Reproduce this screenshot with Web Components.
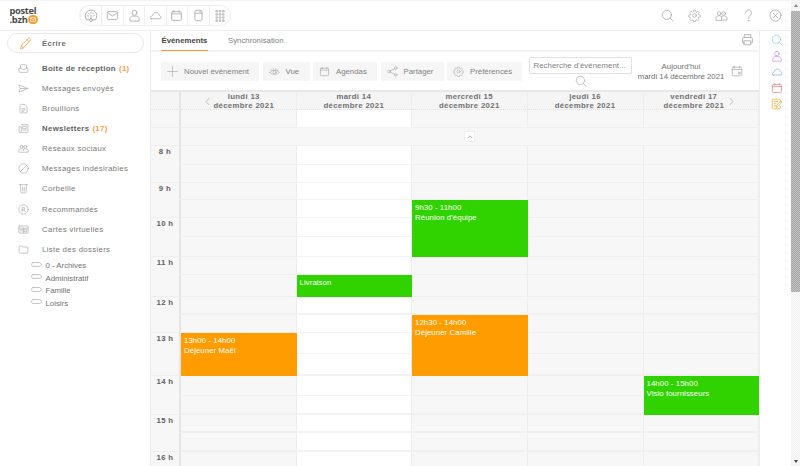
<!DOCTYPE html>
<html lang="fr"><head><meta charset="utf-8"><title>Agenda</title>
<style>
html,body{margin:0;padding:0;height:466px;overflow:hidden;background:#fff}
body{font-family:"Liberation Sans",Arial,sans-serif;color:#666}
</style></head><body>
<app-shell></app-shell>
<script>
const ic={
 dash:'<path d="M4 15.500a8.300 8.300 0 1 1 12 0h-3.500M7.500 15.500H4"/><path d="M10 14V9M5 9l1.500 1M15 9l-1.500 1M10 4.500V6M6.500 6l1 1M13.500 6l-1 1"/><circle cx="10" cy="16" r="2"/>',
 mail:'<rect x="2" y="4" width="16" height="12" rx="1.500"/><path d="M3 6l7 5 7-5"/>',
 user:'<circle cx="10" cy="6" r="3.800"/><path d="M3 18v-3c0-2.500 2-4 4-4h6c2 0 4 1.500 4 4v3z"/>',
 cloud:'<path d="M3.500 15h13c2.500 0 2.500-3.500.5-4C15.500 8 13 5 10.500 5 8 5 6 8 5 10.500 2 11 1 15 3.500 15z"/>',
 cal:'<rect x="2.500" y="4" width="15" height="13.500" rx="1.500"/><path d="M2.500 7.500h15M6 2.500V5M14 2.500V5"/>',
 drive:'<rect x="4.500" y="2" width="11" height="16" rx="2.500"/><path d="M4.500 6.500h11M11.500 4.300h2"/>',
 search:'<circle cx="9" cy="9" r="7"/><path d="M14 14l4.500 4.500"/>',
 gear:'<circle cx="10" cy="10" r="2.800"/><path d="M8.500 1.500h3l.5 2.500 1.700.7 2.100-1.400 2.100 2.100-1.400 2.100.7 1.700 2.500.5v3l-2.500.5-.7 1.700 1.400 2.100-2.100 2.100-2.100-1.400-1.700.7-.5 2.500h-3l-.5-2.500-1.700-.7-2.100 1.400-2.100-2.100 1.400-2.100-.7-1.700-2.500-.5v-3l2.500-.5.7-1.700-1.400-2.100 2.100-2.100 2.100 1.400 1.700-.7z" transform="translate(.8 .4) scale(.92)"/>',
 people:'<circle cx="6.500" cy="7" r="2.800"/><circle cx="13.500" cy="7" r="2.800"/><path d="M1.500 17v-3c0-2 1.500-3.500 5-3.500S10 12 10 14v3zM10 14c0-2 1-3.500 3.500-3.500s5 1.500 5 3.500v3H10"/>',
 help:'<path d="M5.500 6C5.500 3.500 7.500 1.500 10 1.500c2.500 0 4.500 2 4.500 4.500 0 3.500-4.500 4-4.500 8"/><circle cx="10" cy="18" r=".6"/>',
 close:'<circle cx="10" cy="10" r="8.500"/><path d="M6.500 6.500l7 7M13.500 6.500l-7 7"/>',
 print:'<path d="M5 7V2.500h10V7M5 15H2.500V8.500C2.500 7.500 3 7 4 7h12c1 0 1.500.5 1.500 1.500V15H15"/><rect x="5" y="12" width="10" height="6"/>',
 pencil:'<path d="M2.500 18l1-5L14 2.500c1-1 2-1 3 0s1 2 0 3L6.500 17z"/><path d="M12.500 4l3.500 3.500M3.500 13l3 4"/>',
 inbox:'<path d="M4.500 9V4.500C4.500 3.500 5 3 6 3h8c1 0 1.500.5 1.500 1.500V9"/><path d="M2 9.500h4.500l1.500 2.500h4l1.500-2.500H18v6c0 1-.5 1.500-1.500 1.500h-13C2.500 17 2 16.500 2 15.500z"/>',
 sent:'<path d="M2 3.500l16 6.500-16 6.500 2-6.500zM4 10h14"/>',
 draft:'<path d="M3.500 4c0-1 .5-1.500 1.500-1.500h7.500L16.500 7v9.500c0 1-.5 1.500-1.500 1.500H5c-1 0-1.500-.5-1.500-1.500z"/><path d="M7 10.500h6M7 13h6M7 15.500h3"/>',
 news:'<path d="M6 3h12v13c0 1-.5 1.500-1.500 1.500h-13C2.500 17.500 2 17 2 16V7h4v9"/><path d="M9 6h6v4.500H9zM9 13h6"/>',
 social:'<circle cx="6.500" cy="7" r="2.800"/><circle cx="13.500" cy="7" r="2.800"/><path d="M1.500 16v-2c0-2 1.500-3.500 5-3.500S10 12 10 14c0-2 1-3.500 3.500-3.500s5 1.500 5 3.500v2z"/>',
 ban:'<circle cx="10" cy="10" r="8.500"/><path d="M4.500 15.500l11-11"/>',
 trash:'<path d="M2.500 3h15M4.500 3l.7 13.500c0 1 .5 1.500 1.500 1.500h6.600c1 0 1.500-.5 1.500-1.500L15.500 3M8.500 7.500v7M11.500 7.500v7"/>',
 reg:'<circle cx="10" cy="10" r="8.500"/><path d="M7.500 14V6.500h3c2.500 0 2.500 4 0 4h-3M10.500 10.500L13 14"/>',
 cards:'<rect x="1.500" y="3.500" width="17" height="13" rx="1"/><path d="M1.500 7.500h17M10 7.500v9M4 10h4M4 12.500h4M12 10h4v4h-4z"/>',
 folder:'<path d="M2 5c0-1 .5-1.500 1.500-1.500h4L9 5.500h7.500c1 0 1.500.5 1.500 1.500v8c0 1-.5 1.500-1.500 1.500h-13C2.500 16.500 2 16 2 15z"/>',
 tag:'<path d="M4 6.500h11.500c1 0 3.500 2 3.500 3.500s-2.500 3.500-3.500 3.500H4c-1.800 0-3-1.500-3-3.500s1.200-3.500 3-3.500z"/>',
 plus:'<path d="M10 1v18M1 10h18"/>',
 eye:'<path d="M1.500 11.500c3.500-5 13.500-5 17 0-3.500 5-13.500 5-17 0z"/><circle cx="10" cy="11.500" r="2.800"/><path d="M3.500 6.500l1.500 2M7.500 4.500l.5 2.500M12.500 4.500L12 7M16.500 6.500L15 8.500"/>',
 share:'<circle cx="3.800" cy="10" r="2.300"/><circle cx="16" cy="3.800" r="2.300"/><circle cx="16" cy="16.200" r="2.300"/><path d="M5.800 9l8.200-4.200M5.800 11l8.200 4.200"/>',
 today:'<rect x="2" y="3.500" width="16" height="14.500" rx="2"/><path d="M2 7.500h16M6 2v3M14 2v3"/><circle cx="13.500" cy="13.500" r="1.800"/>',
 left:'<path d="M13 3l-6 7 6 7"/>',
 right:'<path d="M7 3l6 7-6 7"/>',
 up:'<path d="M5 12l5-5 5 5"/>',
 note:'<path d="M15.500 7V3.500c0-1-.5-1.500-1.500-1.500H3.500C2.500 2 2 2.500 2 3.500v13c0 1 .5 1.500 1.500 1.500H14c1 0 1.500-.5 1.500-1.500V14"/><path d="M5 6h6M5 9.500h3M5 13h3"/><path d="M8.500 15.500l1-3.500 7-7 2 2-7 7z"/>'
};
function svg(name,size,color,sw){
 return `<svg width="${size}" height="${size}" viewBox="0 0 20 20" fill="none" stroke="${color||'#999'}" stroke-width="${sw||1.400}" stroke-linecap="round" stroke-linejoin="round" aria-hidden="true">${ic[name]}</svg>`;
}
function dots(){let s='';for(let y=0;y<4;y++)for(let x=0;x<3;x++)s+=`<circle cx="${4.500+x*5.500}" cy="${2+y*5.300}" r="2.300"/>`;
 return `<svg width="12" height="12" viewBox="0 0 20 20" fill="#c4c4c4" aria-hidden="true">${s}</svg>`;}
function def(tag,html){
 customElements.define(tag,class extends HTMLElement{
  constructor(){super();this.attachShadow({mode:'open'}).innerHTML=typeof html==='function'?html(this):html;}
 });
}
const F='"Liberation Sans",sans-serif';
def('app-logo',`<style>:host{display:block;position:relative;width:40px;height:20px;font:700 9.300px/9px "Open Sans",sans-serif;color:#4a4a4a;letter-spacing:-.3px}
 .t{padding-left:9.500px;white-space:nowrap}
 .b{position:absolute;left:28px;top:9.500px;width:10px;height:9px;border-radius:4.500px;background:#f79a2e;display:flex;align-items:center;justify-content:center}
 </style><div class="t">postel<br>.bzh</div><span class="b"><svg width="6" height="5" viewBox="0 0 7 6" fill="none" stroke="#fff" stroke-width=".9"><rect x=".5" y=".5" width="6" height="5" rx="1"/><path d="M.5 1.500l3 2 3-2"/></svg></span>`);
def('top-apps',()=>`<style>:host{display:flex;height:21px;box-sizing:border-box;border:1px solid #eee;border-radius:11px;margin-left:39px;overflow:hidden;width:152px;flex:none}
 span{flex:1;display:flex;align-items:center;justify-content:center;border-left:1px solid #eee;box-sizing:border-box}
 span:first-child{border-left:0}
 </style><span>${svg('dash',14,'#b0b0b0')}</span><span>${svg('mail',13,'#b0b0b0')}</span><span>${svg('user',13,'#b0b0b0')}</span><span>${svg('cloud',13,'#b0b0b0')}</span><span>${svg('cal',13,'#b0b0b0')}</span><span>${svg('drive',13,'#b0b0b0')}</span><span>${dots()}</span>`);
def('top-bar',()=>`<style>:host{display:flex;align-items:center;height:31px;box-sizing:border-box;border-bottom:1px solid #eee;border-top:1px solid #f2f2f2;flex:none}
 .tools{margin-left:auto;display:flex;align-items:center;gap:12px;padding-right:7.500px}
 .tools span{width:15px;display:flex;justify-content:center}
 </style><app-logo></app-logo><top-apps></top-apps>
 <div class="tools"><span>${svg('search',13,'#a5a5a5',1.200)}</span><span>${svg('gear',13,'#a5a5a5',1.100)}</span><span>${svg('people',13,'#a5a5a5',1.100)}</span><span>${svg('help',13,'#a5a5a5',1.200)}</span><span>${svg('close',13,'#a5a5a5',1.200)}</span></div>`);
def('compose-btn',()=>`<style>:host{display:flex;align-items:center;box-sizing:border-box;height:20px;margin:2px 6px 0 7px;border:1px solid #e8e8e8;border-radius:10px;font:bold 7.800px ${F};letter-spacing:.33px;color:#707070}
 svg{margin:0 10px 0 11px}
 span{padding-top:1px}</style>${svg('pencil',13,'#f0a050',1.300)}<span><slot></slot></span>`);
def('nav-item',h=>`<style>:host{display:flex;align-items:center;height:20.150px;padding-left:15px;font:7.800px ${F};letter-spacing:.33px;color:#7a7a7a;white-space:nowrap}
 :host([strong]){font-weight:700;color:#606060}
 b{color:#f59c42;font-weight:700;margin-left:3px}
 .i{width:17px;height:14px;margin-right:10px;display:flex;align-items:center;justify-content:center}
 </style><span class="i">${svg(h.getAttribute('icon'),11,'#b0b0b0',1.300)}</span><slot></slot>${h.hasAttribute('count')?`<b>(${h.getAttribute('count')})</b>`:''}`);
def('folder-item',()=>`<style>:host{display:flex;align-items:center;height:12.500px;padding-left:31px;font:7.800px ${F};color:#707070}
 svg{margin-right:3.500px;margin-top:-3px}</style>${svg('tag',11,'#aaa',1.300)}<slot></slot>`);
def('side-nav',`<style>:host{display:block;width:150px;flex:none;border-right:1px solid #ececec}
 .items{margin-top:5px}</style>
 <compose-btn>Écrire</compose-btn><div class="items">
 <nav-item icon="inbox" strong count="1">Boite de réception</nav-item>
 <nav-item icon="sent">Messages envoyés</nav-item>
 <nav-item icon="draft">Brouillons</nav-item>
 <nav-item icon="news" strong count="17">Newsletters</nav-item>
 <nav-item icon="social">Réseaux sociaux</nav-item>
 <nav-item icon="ban">Messages indésirables</nav-item>
 <nav-item icon="trash">Corbeille</nav-item>
 <nav-item icon="reg">Recommandés</nav-item>
 <nav-item icon="cards">Cartes virtuelles</nav-item>
 <nav-item icon="folder">Liste des dossiers</nav-item></div>
 <div><folder-item>0 - Archives</folder-item><folder-item>Administratif</folder-item><folder-item>Famille</folder-item><folder-item>Loisirs</folder-item></div>`);
def('cal-tabs',()=>`<style>:host{display:flex;flex:none;height:21px;box-sizing:border-box;border-bottom:2px solid #f3f3f3;padding-left:10px;gap:20px;font:7.800px ${F};color:#808080}
 span{height:20px;line-height:20px;box-sizing:border-box}
 .on{color:#444;font-weight:700;border-bottom:1px solid #f59c2e;width:47px;white-space:nowrap;padding-left:.5px}
 .p{margin-left:auto;margin-right:5px;margin-top:2px;line-height:0;height:auto}
 </style><span class="on">Événements</span><span>Synchronisation</span><span class="p">${svg('print',13,'#aaa',1.300)}</span>`);
def('tool-btn',h=>`<style>:host{display:flex;align-items:center;box-sizing:border-box;height:19px;background:#f6f6f6;font:7.800px ${F};color:#808080;padding:0 0 0 6px;gap:6px;white-space:nowrap;flex:none;width:${h.getAttribute('w')}px}</style>${svg(h.getAttribute('icon'),11,'#aaa',1.200)}<slot></slot>`);
def('cal-toolbar',()=>`<style>:host{display:flex;flex:none;align-items:flex-start;height:38px;padding:10px 0 0 10px;box-sizing:border-box}
 tool-btn{margin-right:3.500px}
 .s{margin-left:3.500px;margin-top:-5px;width:103px;flex:none;display:flex;flex-direction:column;align-items:center}
 .s div{box-sizing:border-box;width:103px;height:17px;border:1px solid #e0e0e0;border-radius:1px;padding-left:3.500px;font:7.800px/15px ${F};letter-spacing:.06px;color:#808080;white-space:nowrap;overflow:hidden}
 .s svg{margin-top:1px}
 .d{width:92px;flex:none;margin-left:3px;font:7.800px/9.500px ${F};color:#707070;text-align:center;white-space:nowrap}
 .c{margin-left:4px;margin-top:3px;line-height:0}
 </style><tool-btn icon="plus" w="98">Nouvel événement</tool-btn><tool-btn icon="eye" w="47">Vue</tool-btn><tool-btn icon="cal" w="64">Agendas</tool-btn><tool-btn icon="share" w="63">Partager</tool-btn><tool-btn icon="gear" w="75">Préférences</tool-btn>
 <div class="s"><div>Recherche d'événement...</div>${svg('search',12,'#aaa',1.200)}</div>
 <div class="d">Aujourd'hui<br>mardi 14 décembre 2021</div><span class="c">${svg('today',12,'#aaa',1.200)}</span>`);
const rows=[19,18,17,18,19,20,18,22,18,18,21,22,20,19,18,19,20];
const hours={0:'8 h',2:'9 h',4:'10 h',6:'11 h',8:'12 h',10:'13 h',12:'14 h',14:'15 h',16:'16 h'};
const thick={8:1,11:1,13:1,14:1,15:1};
def('cal-grid',()=>{
 let c='';
 const days=['lundi 13','mardi 14','mercredi 15','jeudi 16','vendredi 17'];
 c+=`<div class="hd t" style="grid-area:1/1"></div>`;
 days.forEach((d,i)=>{c+=`<div class="hd${i==0?' f':i==4?' z':''}" style="grid-area:1/${i+2}">${i==0?`<span class="l">${svg('left',9,'#aaa',1.600)}</span>`:''}${d}<br>décembre 2021${i==4?`<span class="r">${svg('right',9,'#aaa',1.600)}</span>`:''}</div>`;});
 c+=`<div class="c t" style="grid-area:2/1"></div>`;
 for(let i=0;i<5;i++)c+=`<div class="c${i==1?' w':''}" style="grid-area:2/${i+2}"></div>`;
 c+=`<div class="c t" style="grid-area:3/1"></div><div class="c col" style="grid-area:3/2/auto/7"><span>${svg('up',8,'#999',2)}</span></div>`;
 rows.forEach((_,r)=>{
  const gr=r+4, half=r%2==0, k=thick[r]?' k':'';
  c+=`<div class="c t${half?' n':''}" style="grid-area:${gr}/1">${hours[r]||''}</div>`;
  for(let i=0;i<5;i++)c+=`<div class="c${i==1?' w':''}${k}" style="grid-area:${gr}/${i+2}"></div>`;
 });
 const G='#30d300',O='#ff9c00';
 const ev=[[3,3,3,G,'9h30 - 11h00',"Réunion d'équipe"],[2,7,1,G,'','Livraison'],[3,9,3,O,'12h30 - 14h00','Déjeuner Camille'],[1,10,2,O,'13h00 - 14h00','Déjeuner Maël'],[5,12,2,G,'14h00 - 15h00','Visio fournisseurs']];
 return `<style>:host{display:grid;flex:none;grid-template-columns:30px 115.500px 115.500px 115.500px 116px 115.500px;grid-template-rows:18px 18px 18px ${rows.map(x=>x+'px').join(' ')};border-top:2px solid #e8e8e8;background:#f7f7f7;box-sizing:border-box;overflow:hidden}
 .hd{font:bold 7.800px/9px ${F};letter-spacing:.33px;color:#707070;text-align:center;position:relative;border-right:1px solid #eee;border-bottom:1px dotted #e2e2e2;background:#f5f5f5;white-space:nowrap;box-sizing:border-box}
 .f{padding-left:11px}.z{padding-right:14px}
 .l,.r{position:absolute;top:4.500px;line-height:0}.l{left:22px}.r{right:22px}
 .c{background:#f7f7f7;border-right:1px solid #ededed;border-bottom:1px solid #efefef;box-sizing:border-box}
 .k{border-bottom:2px solid #f0f0f0}
 .w{background:#fff;border-bottom-color:#f2f2f2}
 .t{border-right:2px solid #e5e5e5;font:bold 7.800px/11px ${F};color:#606060;text-align:center;letter-spacing:.33px}
 .hd.t{border-right:2px solid #e5e5e5}
 .n{border-bottom-color:transparent}
 .col{display:flex;align-items:center;justify-content:center}
 .col span{width:9px;height:9px;background:#fff;border:1px solid #eee;display:flex;align-items:center;justify-content:center;line-height:0}
 cal-event{z-index:1}</style>`+c+ev.map(e=>`<cal-event style="grid-area:${e[1]+4}/${e[0]+1}/span ${e[2]}/span 1;background:${e[3]}">${e[4]?`${e[4]}<br>`:''}${e[5]}</cal-event>`).join('');
});
def('cal-event',`<style>:host{display:block;padding:3px 3px;color:#fff;font:7.800px/9.500px ${F};letter-spacing:.08px;overflow:hidden;box-sizing:border-box;min-height:0}</style><slot></slot>`);
def('right-rail',()=>`<style>:host{display:flex;flex-direction:column;align-items:center;width:31px;flex:none;padding:3px 0 0 3px;gap:3.500px;border-left:1px solid #eee;box-sizing:border-box}
 span{height:12.500px;line-height:0}
 </style><span>${svg('search',12,'#9fd8ee',1.600)}</span><span>${svg('user',12,'#d29df0',1.400)}</span><span>${svg('cloud',12,'#8ab4dc',1.400)}</span><span>${svg('cal',12,'#ee8f8f',1.400)}</span><span>${svg('note',12,'#f5b350',1.400)}</span>`);
def('fake-scroll',`<style>:host{display:flex;flex-direction:column;position:absolute;right:0;top:0;bottom:0;width:9px;background:repeating-conic-gradient(#f0f0f0 0 25%,#fbfbfb 0 50%) 0 0/2px 2px}
 .a{height:11px;flex:none;display:flex;align-items:center;justify-content:center;background:#f4f4f4}
 .a i{display:block;width:0;height:0;border:2.500px solid transparent}
 .u i{border-bottom:3px solid #888;margin-top:-3px}.d i{border-top:3px solid #444;margin-top:3px}
 .t{height:281px;flex:none;background:repeating-conic-gradient(#a6a6a6 0 25%,#c2c2c2 0 50%) 0 0/2px 2px}.s{flex:1}</style><div class="a u"><i></i></div><div class="t"></div><div class="s"></div><div class="a d"><i></i></div>`);
def('app-shell',`<style>:host{display:block;position:relative;width:800px;height:466px;overflow:hidden;box-sizing:border-box;padding-right:10px}
 .b{display:flex;height:435px}
 main{flex:1;min-width:0;overflow:hidden;display:flex;flex-direction:column}
 </style><top-bar></top-bar><div class="b"><side-nav></side-nav><main><cal-tabs></cal-tabs><cal-toolbar></cal-toolbar><cal-grid></cal-grid></main><right-rail></right-rail></div><fake-scroll></fake-scroll>`);
</script></body></html>
